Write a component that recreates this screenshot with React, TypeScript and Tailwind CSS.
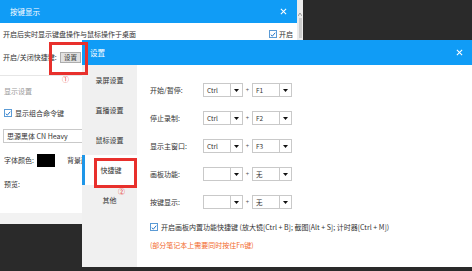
import { ReactNode } from "react";

const Check = ({ checked = true }: { checked?: boolean }) => (
    <span className="w-[8px] h-[8px] border border-[#5b9bd5] bg-white flex items-center justify-center shrink-0">
        {checked && (
            <svg width="7" height="7" viewBox="0 0 8 8">
                <path d="M1 4.2 L3.1 6.2 L7 1.6" stroke="#1e73c8" strokeWidth="1.3" fill="none" />
            </svg>
        )}
    </span>
);

const CloseX = () => (
    <svg width="7" height="7" viewBox="0 0 8 8">
        <path d="M1 1 L7 7 M7 1 L1 7" stroke="#ffffff" strokeWidth="1.2" />
    </svg>
);

const Select = ({ value }: { value: string }) => (
    <div className="w-[40px] h-[14px] border border-[#c9c9c9] bg-white flex items-stretch">
        <span className="flex-1 pl-[3px] flex items-center text-[6.5px] text-[#333]">{value}</span>
        <span className="w-[12px] border-l border-[#c9c9c9] flex items-center justify-center">
            <svg width="5" height="3" viewBox="0 0 5 3">
                <path d="M0 0 L5 0 L2.5 3 Z" fill="#111" />
            </svg>
        </span>
    </div>
);

const KeyRow = ({ label, mod, k }: { label: string, mod: string, k: string }) => (
    <div className="h-[14px] flex items-center">
        <span className="w-[53px] text-[7px] text-[#333]">{label}</span>
        <Select value={mod} />
        <span className="w-[9px] text-center text-[6px] text-[#555]">+</span>
        <Select value={k} />
    </div>
);

const NavItem = ({ active, children }: { active?: boolean, children: ReactNode }) => (
    <div className={`h-[30px] flex items-center justify-center text-[7px] text-[#333] ${active ? "bg-white border-l-[3px] border-[#1e96e8]" : ""}`}>
        {children}
    </div>
);

const App = () => {
    return (
        <div className="relative w-[472px] h-[271px] overflow-hidden bg-[#2a2a2a] font-['Noto_Sans_CJK_SC','Liberation_Sans',sans-serif] leading-none">
            {/* back window */}
            <div className="absolute left-0 top-0 w-[303px] h-[224px] flex bg-white">
                <div className="flex-1 flex flex-col">
                    <div className="h-[23px] bg-[#109cf6] flex items-center justify-between pl-[10px] pr-[10px] text-white text-[7.5px]">
                        <span>按键显示</span>
                        <CloseX />
                    </div>
                    <div className="h-[22px] flex items-center justify-between pl-[3px] pr-[4px] text-[7px] text-[#333]">
                        <span>开启后实时显示键盘操作与鼠标操作于桌面</span>
                        <span className="flex items-center gap-[2px]"><Check />开启</span>
                    </div>
                    <div className="h-[24px] flex items-center pl-[3px] text-[7px] text-[#333]">
                        <span className="w-[57px]">开启/关闭快捷键:</span>
                        <span className="h-[11px] px-[3px] bg-[#e1e1e1] border border-[#adadad] flex items-center text-[6.5px]">设置</span>
                    </div>
                    <div className="mt-[6px] h-px bg-[#e6e6e6]" />
                    <div className="h-[30px] flex items-center pl-[4px] text-[7px] text-[#9a9a9a]">显示设置</div>
                    <div className="h-[14px] flex items-center gap-[3px] pl-[4px] text-[7px] text-[#333]">
                        <Check />显示组合命令键
                    </div>
                    <div className="mt-[9px] ml-[3px] h-[14px] border border-[#c9c9c9] flex items-center pl-[3px] text-[7px] text-[#333]">
                        思源黑体 CN Heavy
                    </div>
                    <div className="mt-[11px] h-[13px] flex items-center pl-[4px] text-[7px] text-[#333]">
                        <span className="w-[33px]">字体颜色:</span>
                        <span className="w-[18px] h-[13px] bg-black" />
                        <span className="ml-[12px]">背景颜色:</span>
                    </div>
                    <div className="mt-[10px] h-[14px] flex items-center pl-[4px] text-[7px] text-[#333]">预览:</div>
                    <div className="flex-1" />
                    <div className="h-[11px] bg-[#f2f2f2]" />
                </div>
                <div className="w-[6px] bg-[#ececec] flex flex-col items-center pt-[13px]">
                    <svg width="4" height="3" viewBox="0 0 4 3">
                        <path d="M0 3 L2 0 L4 3" stroke="#888" strokeWidth="0.8" fill="none" />
                    </svg>
                    <span className="mt-[2px] w-[3px] h-[20px] bg-[#cdcdcd]" />
                </div>
            </div>

            {/* front window */}
            <div className="absolute left-[82px] top-[40px] right-0 h-[227px] flex flex-col bg-white">
                <div className="h-[25px] bg-[#109cf6] flex items-center justify-between pl-[8px] pr-[9px] text-white text-[7.5px]">
                    <span>设置</span>
                    <CloseX />
                </div>
                <div className="flex-1 flex">
                    <div className="w-[55px] bg-[#f0f0f0] flex flex-col">
                        <NavItem>录屏设置</NavItem>
                        <NavItem>直播设置</NavItem>
                        <NavItem>鼠标设置</NavItem>
                        <NavItem active>快捷键</NavItem>
                        <NavItem>其他</NavItem>
                    </div>
                    <div className="flex-1 pl-[13px] pt-[18px] flex flex-col">
                        <div className="flex flex-col gap-[14px]">
                            <KeyRow label="开始/暂停:" mod="Ctrl" k="F1" />
                            <KeyRow label="停止录制:" mod="Ctrl" k="F2" />
                            <KeyRow label="显示主窗口:" mod="Ctrl" k="F3" />
                            <KeyRow label="画板功能:" mod="" k="无" />
                            <KeyRow label="按键显示:" mod="" k="无" />
                        </div>
                        <div className="mt-[11px] h-[14px] flex items-center gap-[3px] text-[7px] text-[#333]">
                            <Check />
                            <span>开启画板内置功能快捷键 (放大镜[Ctrl + B]; 截图[Alt + S]; 计时器[Ctrl + M])</span>
                        </div>
                        <div className="mt-[5px] h-[12px] flex items-center text-[7px] text-[#f26a2e]">
                            (部分笔记本上需要同时按住Fn键)
                        </div>
                    </div>
                </div>
            </div>

            {/* annotations */}
            <div className="absolute left-[49px] top-[42px] w-[39px] h-[33px] border-[3px] border-[#e8302c]" />
            <span className="absolute left-[62px] top-[76px] text-[7px] text-[#e8302c]">①</span>
            <div className="absolute left-[94px] top-[158px] w-[43px] h-[30px] border-[3px] border-[#e8302c]" />
            <span className="absolute left-[118px] top-[188px] text-[7px] text-[#e8302c]">②</span>
        </div>
    );
};

export default App;
